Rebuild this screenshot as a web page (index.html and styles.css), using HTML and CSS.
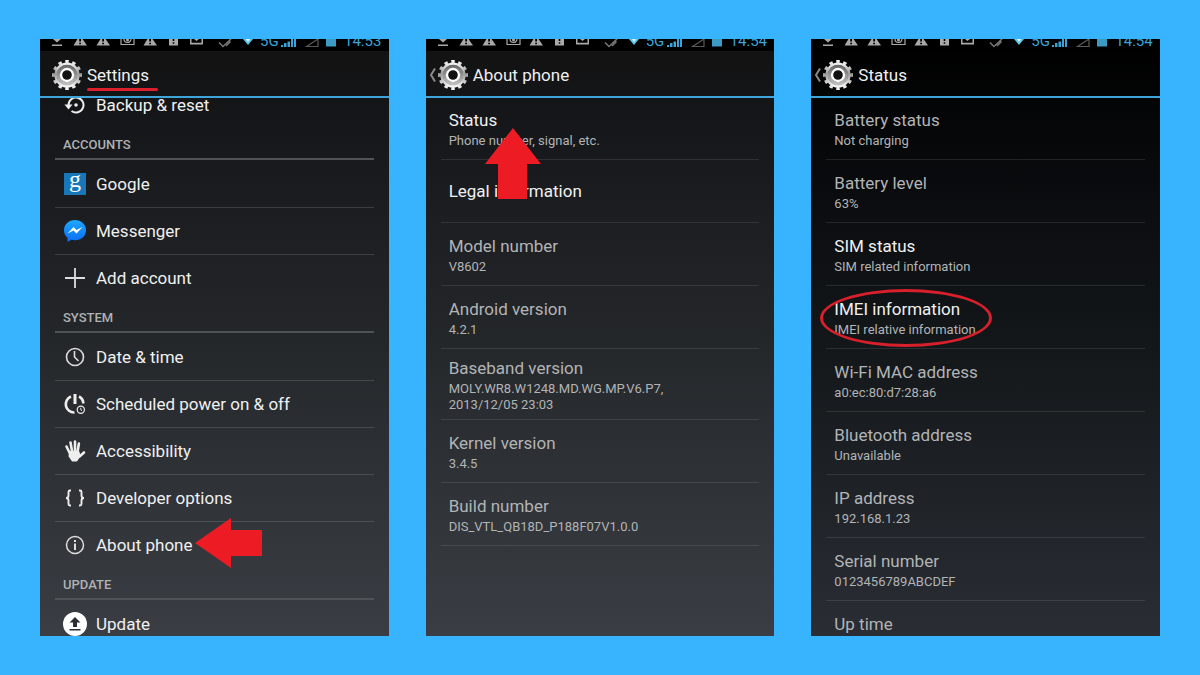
FILE: index.html
```html
<!DOCTYPE html>
<html lang="en">
<head>
    <meta charset="UTF-8">
    <title>Find your IMEI in Android settings</title>
    <link rel="stylesheet" href="styles.css">
</head>
<body>

<!-- shared icons -->
<svg class="defs" width="0" height="0" aria-hidden="true">
    <linearGradient id="metal" x1="0" y1="0" x2="0" y2="1">
        <stop offset="0" stop-color="#f0f0f0"/>
        <stop offset="0.45" stop-color="#9a9a9a"/>
        <stop offset="1" stop-color="#f4f4f4"/>
    </linearGradient>
    <linearGradient id="ring" x1="0" y1="0" x2="0" y2="1">
        <stop offset="0" stop-color="#6c6c6c"/>
        <stop offset="1" stop-color="#bdbdbd"/>
    </linearGradient>
    <linearGradient id="bubble" x1="0" y1="0" x2="0" y2="1">
        <stop offset="0" stop-color="#1fa8ff"/>
        <stop offset="1" stop-color="#0a6cf5"/>
    </linearGradient>
    <symbol id="gear" viewBox="0 0 30 30">
        <circle cx="15" cy="15" r="13.5" fill="none" stroke="url(#metal)" stroke-width="3" pathLength="24" stroke-dasharray="1 1" stroke-dashoffset="0.5"/>
        <circle cx="15" cy="15" r="11.300" fill="none" stroke="url(#metal)" stroke-width="2.600"/>
        <circle cx="15" cy="15" r="8.600" fill="none" stroke="url(#ring)" stroke-width="3.400"/>
        <circle cx="15" cy="15" r="6" fill="#111" stroke="#fff" stroke-width="2.400"/>
    </symbol>
    <symbol id="back" viewBox="0 0 12 30">
        <path d="M9 8.500L5 15l4 6.500" fill="none" stroke="#8a8a8a" stroke-width="2"/>
    </symbol>
    <symbol id="tray" viewBox="0 0 220 12">
        <g fill="#a9a9a9">
            <path d="M13 0h8l-4 3.500zM12 5.500h10V7H12z"/>
            <path id="warn" fill-rule="evenodd" d="M37.500 0h5L47 6.500H33.500zM39.200 0v2.500H41V0zM39.200 3.700v1.500H41V3.700z"/>
            <use href="#warn" x="23"/>
            <use href="#warn" x="70"/>
            <path d="M129 0h9v6.500h-9zM132.700 0v2h1.600V0zM132.700 3.200v1.600h1.600V3.200z" fill-rule="evenodd"/>
            <path d="M150 0h13v5.500h-13zM151.500 0v3.800h10V0H159l-2.500 2L154 0z" fill-rule="evenodd"/>
        </g>
        <g fill="none" stroke="#a9a9a9" stroke-width="1.200">
            <path d="M81 0v5.500h13V0"/>
            <path d="M84 0a3.500 3.500 0 0 0 7 0"/>
        </g>
        <circle cx="87.500" cy="1" r="1.500" fill="#a9a9a9"/>
        <path d="M179 3.500l4 4L191 0M186 7l4.500-4.500" fill="none" stroke="#777" stroke-width="1.500"/>
        <path d="M203 0h10l-5 6z" fill="#5cc6ee"/>
        <path d="M206 0h4l-2 3z" fill="#e8faff"/>
    </symbol>
    <symbol id="signal" viewBox="0 0 56 12">
        <path d="M0 6h2v2H0zM3 4h2.500v4H3zM6.500 2.500H9V8H6.500zM10 0h2v8h-2zM13 0h2v8h-2z" fill="#3aa3d8"/>
        <path d="M25.500 7.500L37 0v7.500z" fill="none" stroke="#5a5a5a" stroke-width="1.200"/>
        <path d="M45 0h10v7.500H45z" fill="#3c9bc4"/>
    </symbol>
</svg>

<main class="board">

    <section class="screen">
        <div class="statusbar">
            <svg class="tray"><use href="#tray"/></svg>
            <span class="net">5G</span>
            <svg class="signal"><use href="#signal"/></svg>
            <span class="time">14:53</span>
        </div>
        <header class="appbar top-level">
            <svg class="gear"><use href="#gear"/></svg>
            <h1 class="marked">Settings</h1>
        </header>
        <div class="content">
            <nav class="settings">
                <a class="item" href="#backup">
                    <svg class="icon" viewBox="0 0 24 24"><path d="M5.500 12a7.500 7.500 0 1 1 3 6" fill="none" stroke="#eee" stroke-width="2"/><path d="M1.500 11.500h8l-4 5z" fill="#eee"/><circle cx="13" cy="12" r="1.800" fill="#eee"/></svg>
                    Backup &amp; reset
                </a>
                <h2>ACCOUNTS</h2>
                <a class="item" href="#google">
                    <svg class="icon" viewBox="0 0 24 24"><path d="M1 1h22v22H1z" fill="#1877b8"/><text class="google-g" x="12" y="15" text-anchor="middle">g</text></svg>
                    Google
                </a>
                <a class="item" href="#messenger">
                    <svg class="icon" viewBox="0 0 24 24"><path d="M12 1C5.700 1 1 5.400 1 11.200c0 3 1.200 5.600 3.500 7.500V23l4-2.200c1.100.300 2.300.400 3.500.400 6.300 0 11-4.300 11-10S18.300 1 12 1z" fill="url(#bubble)"/><path d="M4.500 14.500l6-6.500 3 3 6-3-6 6.500-3-3z" fill="#fff"/></svg>
                    Messenger
                </a>
                <a class="item" href="#add">
                    <svg class="icon" viewBox="0 0 24 24"><path d="M12 2v20M2 12h20" stroke="#ddd" stroke-width="1.800"/></svg>
                    Add account
                </a>
                <h2>SYSTEM</h2>
                <a class="item" href="#date">
                    <svg class="icon" viewBox="0 0 24 24" fill="none" stroke="#ddd" stroke-width="1.600"><circle cx="12" cy="12" r="8.500"/><path d="M11.500 6v6l4 4"/></svg>
                    Date &amp; time
                </a>
                <a class="item" href="#power">
                    <svg class="icon" viewBox="0 0 24 24" fill="none" stroke="#eee"><path d="M12 2v10" stroke-width="3"/><path d="M8 4.500a8.300 8.300 0 0 0 3.500 16M16 4.500a8 8 0 0 1 4.300 7" stroke-width="2.600"/><circle cx="17.800" cy="17.800" r="3.600" stroke-width="1.200"/><path d="M17.800 15.800v2l1.200 1" stroke-width="1"/></svg>
                    Scheduled power on &amp; off
                </a>
                <a class="item" href="#accessibility">
                    <svg class="icon" viewBox="0 0 24 24" fill="none" stroke="#eee" stroke-width="2.600" stroke-linecap="round"><path d="M6.700 14L3.500 7.500M9 12L7.500 3.500M12 12V2.500M14.700 12l1.200-7.500M16.500 17.500l4.500-4"/><path d="M7 13h8.500l1 4-3 4.500H9.500L6.500 17z" fill="#eee" stroke-linejoin="round" stroke-width="2"/></svg>
                    Accessibility
                </a>
                <a class="item" href="#developer">
                    <svg class="icon" viewBox="0 0 24 24" fill="none" stroke="#eee" stroke-width="1.900"><path d="M8 4.500H7Q5.500 4.500 5.500 6v3.500Q5.500 12 3 12q2.500 0 2.500 2.500V18q0 1.500 1.500 1.500h1M16 4.500h1q1.500 0 1.500 1.500v3.500q0 2.500 2.500 2.500-2.500 0-2.500 2.500V18q0 1.500-1.500 1.500h-1"/></svg>
                    Developer options
                </a>
                <a class="item" href="#about">
                    <svg class="icon" viewBox="0 0 24 24"><circle cx="12" cy="12" r="8.500" fill="none" stroke="#ddd" stroke-width="1.500"/><path d="M11 7h2v2h-2zM11 10.500h2V17h-2z" fill="#ddd"/></svg>
                    About phone
                    <svg class="arrow-left" viewBox="0 0 68 50"><path d="M0 25L36 0v12h31v26H36v12z" fill="#ed1c24"/></svg>
                </a>
                <h2>UPDATE</h2>
                <a class="item" href="#update">
                    <svg class="icon" viewBox="0 0 24 24"><circle cx="12" cy="12" r="12" fill="#fff"/><path d="M12 5l5.500 5.500H14V15h-4v-4.500H6.500zM6.500 17h11v1.500h-11z" fill="#2c2f33"/></svg>
                    Update
                </a>
            </nav>
        </div>
    </section>

    <section class="screen">
        <div class="statusbar">
            <svg class="tray"><use href="#tray"/></svg>
            <span class="net">5G</span>
            <svg class="signal"><use href="#signal"/></svg>
            <span class="time">14:54</span>
        </div>
        <header class="appbar">
            <a class="up" href="#settings" aria-label="Back"><svg class="back"><use href="#back"/></svg><svg class="gear"><use href="#gear"/></svg></a>
            <h1>About phone</h1>
        </header>
        <div class="content">
            <ul class="details">
                <li class="active">
                    <a href="#status">Status</a>
                    <p>Phone number, signal, etc.</p>
                    <svg class="arrow-up" viewBox="0 0 56 71"><path d="M28 0l28 36H42v35H13V36H0z" fill="#ed1c24"/></svg>
                </li>
                <li class="active"><a href="#legal">Legal information</a></li>
                <li><h3>Model number</h3><p>V8602</p></li>
                <li><h3>Android version</h3><p>4.2.1</p></li>
                <li><h3>Baseband version</h3><p>MOLY.WR8.W1248.MD.WG.MP.V6.P7,<br>2013/12/05 23:03</p></li>
                <li><h3>Kernel version</h3><p>3.4.5</p></li>
                <li><h3>Build number</h3><p>DIS_VTL_QB18D_P188F07V1.0.0</p></li>
            </ul>
        </div>
    </section>

    <section class="screen darker">
        <div class="statusbar">
            <svg class="tray"><use href="#tray"/></svg>
            <span class="net">5G</span>
            <svg class="signal"><use href="#signal"/></svg>
            <span class="time">14:54</span>
        </div>
        <header class="appbar">
            <a class="up" href="#about" aria-label="Back"><svg class="back"><use href="#back"/></svg><svg class="gear"><use href="#gear"/></svg></a>
            <h1>Status</h1>
        </header>
        <div class="content">
            <ul class="details">
                <li><h3>Battery status</h3><p>Not charging</p></li>
                <li><h3>Battery level</h3><p>63%</p></li>
                <li class="active"><a href="#sim">SIM status</a><p>SIM related information</p></li>
                <li class="active circled"><a href="#imei">IMEI information</a><p>IMEI relative information</p></li>
                <li><h3>Wi-Fi MAC address</h3><p>a0:ec:80:d7:28:a6</p></li>
                <li><h3>Bluetooth address</h3><p>Unavailable</p></li>
                <li><h3>IP address</h3><p>192.168.1.23</p></li>
                <li><h3>Serial number</h3><p>0123456789ABCDEF</p></li>
                <li><h3>Up time</h3><p>&nbsp;</p></li>
            </ul>
        </div>
    </section>

</main>

</body>
</html>
```
FILE: styles.css
```css
*, *::after {
    box-sizing: border-box;
}
body {
    margin: 0;
    background: #38b4ff;
    color: #f0f0f0;
    font-family: Roboto, sans-serif;
}
h1, h2, h3, p, ul {
    margin: 0;
    padding: 0;
    font-weight: normal;
}
a {
    color: inherit;
    text-decoration: none;
}
svg {
    display: block;
    flex: none;
}
.defs {
    position: absolute;
}
.board {
    display: grid;
    grid-template-columns: repeat(3, 1fr);
    gap: 37px;
    height: 100vh;
    padding: 39px 40px;
}
.screen {
    display: flex;
    flex-direction: column;
    min-height: 0;
    background: linear-gradient(#121212, #16171a 15%, #24272a 50%, #3a3d43);
}
.screen.darker {
    background: linear-gradient(#000, #08090b 20%, #15191c 55%, #2a2d34);
}

/* status bar, cut off at the top */
.statusbar {
    display: flex;
    align-items: flex-end;
    height: 12px;
    overflow: hidden;
    background: #000;
    color: #3aa3d8;
    line-height: 20px;
}
.tray {
    width: 220px;
    height: 12px;
}
.net {
    width: 21px;
    font-size: 15px;
}
.signal {
    width: 56px;
    height: 12px;
}
.time {
    margin-left: 7px;
    font-size: 15px;
}

/* title bar */
.appbar {
    display: flex;
    align-items: center;
    gap: 5px;
    height: 47px;
    padding-top: 2px;
    border-bottom: 2px solid #3da5d9;
}
.top-level {
    padding-left: 12px;
}
.up {
    display: flex;
}
.back {
    width: 12px;
    height: 30px;
}
.gear {
    width: 30px;
    height: 30px;
}
.appbar h1 {
    font-size: 17px;
    line-height: 24px;
}
.marked {
    position: relative;
}
.marked::after {
    content: "";
    position: absolute;
    left: 0;
    right: -9px;
    bottom: -4px;
    height: 3px;
    border-radius: 2px;
    background: #dc1f2c;
}

.content {
    flex: 1;
    min-height: 0;
    overflow: hidden;
    padding: 0 15px;
}

/* main settings list, scrolled part of a row down */
.settings {
    margin-top: -17px;
}
.settings h2 {
    height: 32px;
    padding-left: 8px;
    border-bottom: 2px solid #505356;
    color: #b0b2b4;
    font-size: 13px;
    font-weight: 500;
    line-height: 34px;
}
.item {
    position: relative;
    display: flex;
    align-items: center;
    gap: 9px;
    height: 47px;
    padding-left: 8px;
    font-size: 17px;
}
.item + .item {
    border-top: 1px solid rgba(255, 255, 255, 0.14);
}
.icon {
    width: 24px;
    height: 24px;
}
.google-g {
    fill: #fff;
    font: 24px "Liberation Serif", serif;
}
.arrow-left {
    position: absolute;
    left: 140px;
    top: -4px;
    width: 68px;
    height: 50px;
}

/* two-line rows */
.details {
    margin-top: -1px;
    list-style: none;
    color: #b2b4b6;
}
.details li {
    position: relative;
    display: flex;
    flex-direction: column;
    justify-content: center;
    min-height: 63px;
    padding: 6px 8px;
    border-bottom: 1px solid rgba(255, 255, 255, 0.1);
}
.details h3, .details a {
    font-size: 17px;
    line-height: 26px;
}
.details p {
    font-size: 13px;
    line-height: 16px;
}
.active a {
    color: #f0f0f0;
}
.arrow-up {
    position: absolute;
    left: 44px;
    top: 31px;
    z-index: 1;
    width: 56px;
    height: 71px;
}
.circled::after {
    content: "";
    position: absolute;
    left: -6px;
    top: 3px;
    width: 172px;
    height: 58px;
    border: 3px solid #d8202c;
    border-radius: 50%;
}
```
